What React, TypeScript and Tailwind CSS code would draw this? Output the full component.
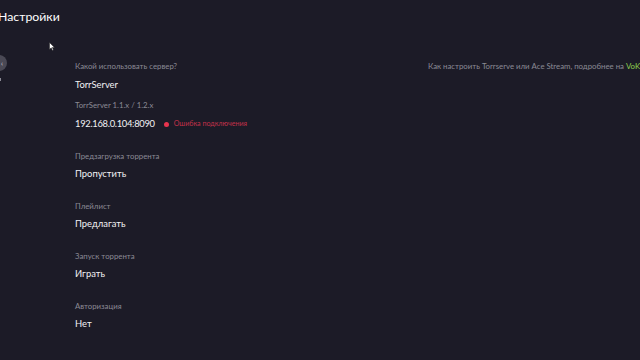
import React from 'react'

const sections = [
  { label: 'Предзагрузка торрента', value: 'Пропустить' },
  { label: 'Плейлист', value: 'Предлагать' },
  { label: 'Запуск торрента', value: 'Играть' },
  { label: 'Авторизация', value: 'Нет' },
]

function Label({ children }: { children: React.ReactNode }) {
  return <div className="text-[7.8px] leading-[12px] text-[#8b8a95]">{children}</div>
}

function Value({ children }: { children: React.ReactNode }) {
  return <div className="mt-[5px] text-[9.4px] leading-[14px] text-[#f2f2f4]">{children}</div>
}

export default function App() {
  return (
    <div
      className="relative w-[640px] h-[360px] overflow-hidden bg-[#1c1b27] text-white"
      style={{ fontFamily: 'Lato, "Noto Sans", sans-serif' }}
    >
      {/* Header */}
      <div className="h-[34px] flex items-center">
        <h1 className="ml-[-2px] text-[12.3px] leading-none font-normal">Настройки</h1>
      </div>

      {/* cursor */}
      <svg className="absolute left-[49px] top-[42px] w-[6px] h-[9px]" viewBox="0 0 6 9">
        <path d="M0.5 0.5 L0.5 7.5 L2.2 5.8 L3.4 8.5 L4.4 8 L3.3 5.4 L5.5 5.4 Z" fill="#fff" stroke="#222" strokeWidth="0.5" />
      </svg>

      <div className="flex">
        {/* Sidebar, mostly off screen */}
        <div className="w-[75px] shrink-0 pt-[21px] relative">
          <div className="ml-[-9px] w-[16px] h-[16px] rounded-full bg-[#4a4955] flex items-center justify-center">
            <span className="ml-[6px] text-[7px] leading-none text-[#d0d0d8]">‹</span>
          </div>
          <div className="mt-[7px] ml-[-2px] w-[3px] h-[3px] bg-[#8b8a95]" />
        </div>

        {/* Content */}
        <div className="w-[353px] shrink-0 pt-[26px]">
          <Label>Какой использовать сервер?</Label>
          <div className="mt-[6px] text-[9.4px] leading-[14px] text-[#f2f2f4]">TorrServer</div>

          <div className="mt-[7px]">
            <Label>TorrServer 1.1.x / 1.2.x</Label>
            <div className="mt-[6px] flex items-center text-[9.4px] leading-[14px] text-[#f2f2f4]">
              <span className="tracking-[-0.3px]">192.168.0.104:8090</span>
              <span className="ml-[9px] w-[5px] h-[5px] rounded-full bg-[#e8344e]" />
              <span className="ml-[5px] text-[7.1px] text-[#c2314a]">Ошибка подключения</span>
            </div>
          </div>

          {sections.map((s) => (
            <div key={s.label} className="mt-[19px]">
              <Label>{s.label}</Label>
              <Value>{s.value}</Value>
            </div>
          ))}
        </div>

        {/* Help text */}
        <div className="pt-[26px] whitespace-nowrap text-[7.8px] leading-[12px] text-[#8b8a95]">
          Как настроить Torrserve или Ace Stream, подробнее на <span className="text-[#8fd14f]">VoK</span>
        </div>
      </div>
    </div>
  )
}
